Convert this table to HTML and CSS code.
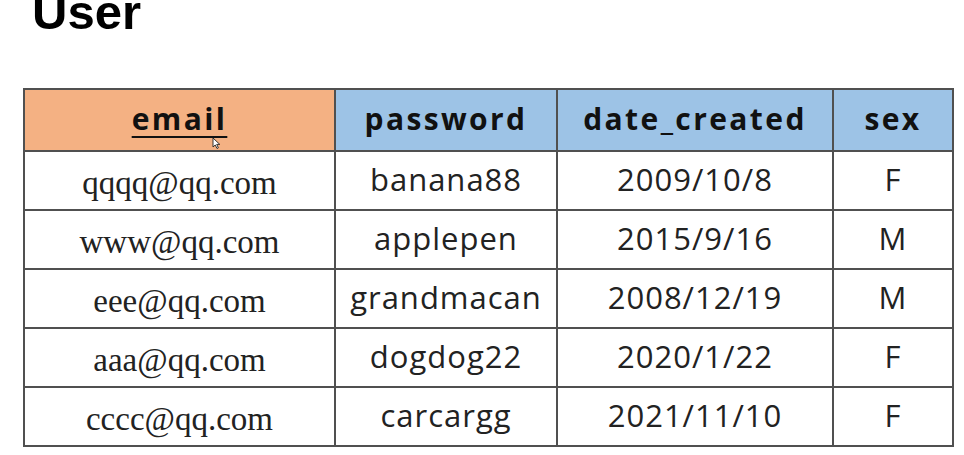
FILE: index.html
```html
<!DOCTYPE html>
<html lang="en">
<head>
<meta charset="utf-8">
<title>User</title>
<link rel="stylesheet" href="styles.css">
</head>
<body>
<h1 class="title">User</h1>
<table class="grid">
  <thead>
    <tr>
      <th class="h-key"><span class="key">email<svg class="cursor" width="9" height="12" viewBox="0 0 9 12"><path d="M1 1 L1 10 L3.2 8 L5 11.5 L6.4 10.8 L4.7 7.4 L7.8 7.4 Z" fill="#fff" stroke="#222" stroke-width="0.9" stroke-linejoin="round"/></svg></span></th>
      <th class="h-col">password</th>
      <th class="h-col">date_created</th>
      <th class="h-col">sex</th>
    </tr>
  </thead>
  <tbody>
    <tr><td class="mail">qqqq@qq.com</td><td>banana88</td><td>2009/10/8</td><td>F</td></tr>
    <tr><td class="mail">www@qq.com</td><td>applepen</td><td>2015/9/16</td><td>M</td></tr>
    <tr><td class="mail">eee@qq.com</td><td>grandmacan</td><td>2008/12/19</td><td>M</td></tr>
    <tr><td class="mail">aaa@qq.com</td><td>dogdog22</td><td>2020/1/22</td><td>F</td></tr>
    <tr><td class="mail">cccc@qq.com</td><td>carcargg</td><td>2021/11/10</td><td>F</td></tr>
  </tbody>
</table>
</body>
</html>
```
FILE: styles.css
```css
html, body {
  margin: 0;
  padding: 0;
  background: #ffffff;
}
body {
  width: 964px;
  height: 455px;
  overflow: hidden;
  font-family: "Open Sans", "Noto Sans", sans-serif;
  color: #1a1a1a;
}
.title {
  margin: -12px 0 0 32px;
  font-family: "Liberation Sans", Arial, sans-serif;
  font-weight: 700;
  font-size: 49px;
  line-height: 49px;
  color: #000;
}
.grid {
  margin: 51px 0 0 23px;
  width: 929px;
  border-collapse: collapse;
  table-layout: fixed;
}
.grid th, .grid td {
  border: 2px solid #505050;
  text-align: center;
  vertical-align: middle;
  padding: 0;
}
.grid th:nth-child(1) { width: 309px; }
.grid th:nth-child(2) { width: 220px; }
.grid th:nth-child(3) { width: 274px; }
.grid th:nth-child(4) { width: 118px; }
.grid th {
  height: 56px;
  font-family: "Open Sans", sans-serif;
  font-weight: 700;
  font-size: 30px;
  letter-spacing: 2.4px;
  color: #111;
  padding-bottom: 4px;
}
.h-key { background: #f4b183; }
.h-col { background: #9dc3e6; }
.key {
  position: relative;
  text-decoration: underline;
  text-decoration-thickness: 2px;
  text-underline-offset: 6px;
}
.cursor {
  position: absolute;
  left: 80px;
  top: 39px;
}
.grid td {
  height: 53px;
  font-size: 31px;
  letter-spacing: 1px;
  color: #222;
  padding-bottom: 4px;
}
.grid td.mail {
  font-family: "Liberation Serif", "Times New Roman", serif;
  font-size: 33px;
  letter-spacing: 0;
  padding: 6px 0 0;
  height: 51px;
}
```
